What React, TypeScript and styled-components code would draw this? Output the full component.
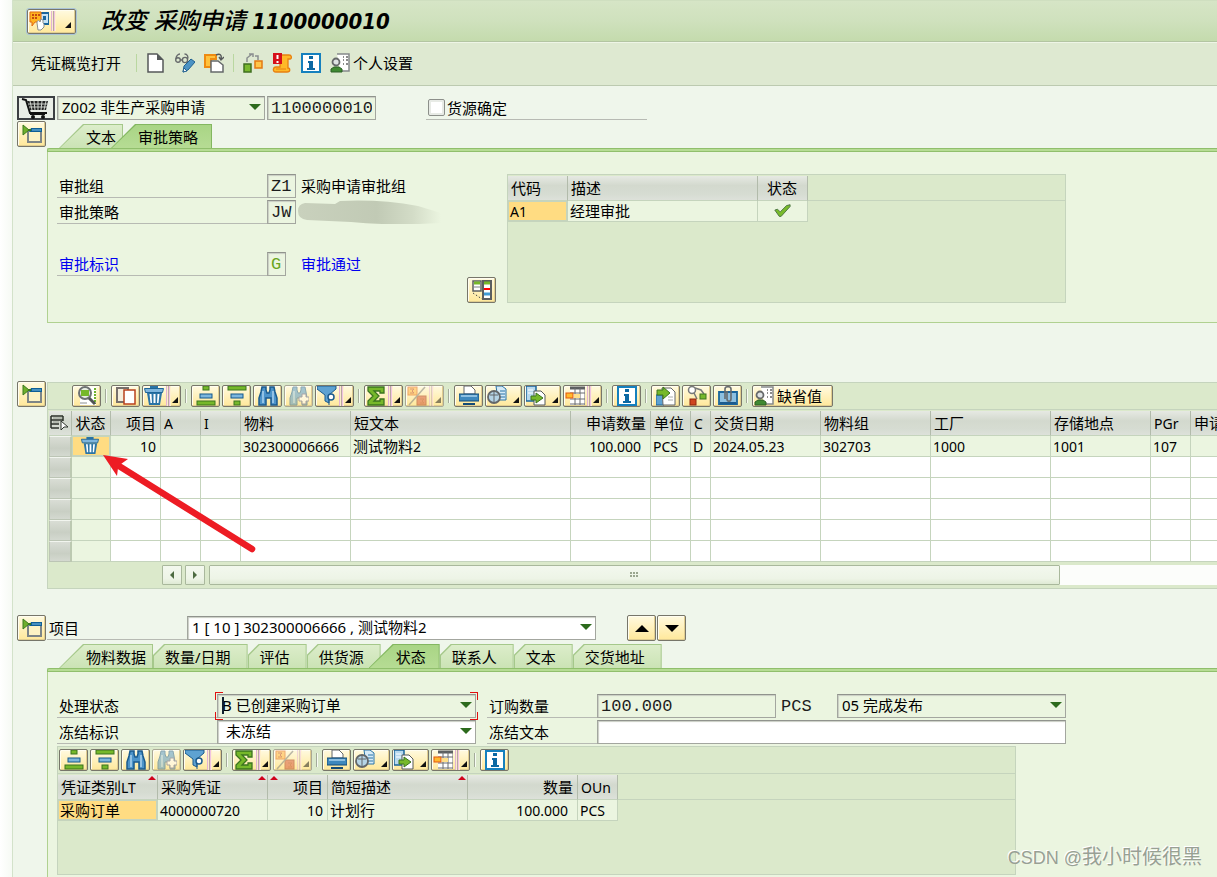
import React from "react";
import styled, { createGlobalStyle, css } from "styled-components";

const c = {
  page: "#eff6eb",
  panel: "#ebf5e0",
  frame: "#dbe9cb",
  line: "#c5d4bd",
  underline: "#b7bab3",
  field: "#a3a69f",
  tabLine: "#90bf6c",
  tabFill: "#b6dc94",
  selected: "#ffdc82",
};

const GlobalStyle = createGlobalStyle`
  *, *::before, *::after { box-sizing: border-box; }
  body { margin: 0; background: #fff; overflow: hidden; }
  body, button, input, select, table {
    font-family: "Noto Sans", "Noto Sans CJK SC", sans-serif;
    font-size: 15px;
    line-height: 20px;
    color: #000;
  }
  button, input, select { margin: 0; }
`;

/* ---------- icons ---------- */

const Icon = styled.svg.attrs({ width: 20, height: 20, viewBox: "0 0 20 20", "aria-hidden": true })`
  display: block;
  flex: none;
`;

const TreeIcon = () => (
  <Icon>
    <rect x="6" y="6" width="13" height="12" fill="#fdf3c4" stroke="#7d8587" strokeWidth="2" />
    <path d="M9 4h11v4H7z" fill="#0f5f96" />
    <path d="M10 6h9" stroke="#7fc0e8" />
    <path d="M1 1v10l6-5z" fill="#6fae2c" stroke="#3a7a1e" />
    <path d="M6 6h3" stroke="#3a7a1e" strokeWidth="2" />
  </Icon>
);
const CartIcon = () => (
  <svg width="30" height="22" viewBox="0 0 30 22" aria-hidden="true">
    <path d="M1 2l4 1 4 13h17" fill="none" stroke="#111" strokeWidth="2" />
    <path d="M6 4h21l-2 9H9z" fill="#222" />
    <path d="M9 4l2 9M13 4l1 9M17 4v9M21 4l-1 9M25 4l-2 9M7 7h20M8 10h18" stroke="#cfd3cd" />
    <path d="M9 17h15" stroke="#111" strokeWidth="2" />
    <circle cx="12" cy="20" r="2" fill="#111" />
    <circle cx="22" cy="20" r="2" fill="#111" />
  </svg>
);
const ServiceIcon = () => (
  <Icon>
    <path d="M12 2h8v11h-7" fill="#c6e2f4" stroke="#1a659c" strokeWidth="2" />
    <rect x="14" y="5" width="3" height="4" fill="#1a659c" />
    <path d="M1 1h11v10H6l-3 4v-4H1z" fill="#ffb41f" stroke="#e06a14" />
    <path d="M3 4h2M6 4h2M9 4h2M3 7h2M6 7h2" stroke="#c64a10" strokeWidth="2" />
    <path d="M8 12c0-3 2-3 3-1l1-3 2 1v3l1 1v3l-3 3H9z" fill="#fff" stroke="#8b8f90" />
  </Icon>
);
const NewIcon = () => (
  <Icon>
    <path d="M2 1h9l6 6v12H2z" fill="#fff" stroke="#55585a" strokeWidth="1.5" />
    <path d="M11 1v6h6z" fill="#55585a" />
  </Icon>
);
const GlassesIcon = () => (
  <Icon>
    <g fill="none" stroke="#66696b" strokeWidth="1.4">
      <circle cx="3" cy="7" r="2.3" />
      <circle cx="10" cy="7" r="2.6" />
      <path d="M1 6c0-3 2-5 4-5M5 7h2M12.5 6c1-2 0-5-3-5" />
    </g>
    <path d="M8 19l1-6 7-7 4 3-7 8z" fill="#4c93c4" stroke="#20608f" />
    <path d="M8 19l1-4 3 3z" fill="#fff" stroke="#20608f" />
  </Icon>
);
const OtherDocIcon = () => (
  <Icon>
    <path d="M1 2h11v4H7v8H1z" fill="#ffc23d" stroke="#ee8b12" strokeWidth="2" />
    <path d="M12 2c4-2 6 0 5 4M15 4l2 3 3-3" fill="none" stroke="#55585a" strokeWidth="1.4" />
    <path d="M7 8h7l5 4v7H7z" fill="#fff" stroke="#66696b" strokeWidth="1.5" />
  </Icon>
);
const FlowIcon = () => (
  <Icon>
    <path d="M4 9V5l5-4M6 1h4v3M12 3h3v4" fill="none" stroke="#8b8f90" strokeWidth="1.5" />
    <rect x="1" y="11" width="7" height="8" fill="#79b82f" stroke="#3f6f1f" strokeWidth="1.5" />
    <rect x="12" y="8" width="7" height="7" fill="#ffc64a" stroke="#e47812" strokeWidth="1.5" />
  </Icon>
);
const MessageIcon = () => (
  <Icon>
    <path d="M7 2h10c3 0 3 4 1 4h-2v9c2 0 3 4-1 4H4c-4 0-3-5 0-5h4V6z" fill="#ffb928" stroke="#e88010" strokeWidth="1.3" />
    <rect x="1" y="0" width="9" height="11" fill="#d6101a" />
    <path d="M5.5 2v4M5.5 8v2" stroke="#fff" strokeWidth="2" />
    <path d="M4 16h10" stroke="#e88010" />
  </Icon>
);
const InfoIcon = () => (
  <Icon>
    <rect x="1" y="1" width="18" height="18" fill="#fff" stroke="#1580be" strokeWidth="2" />
    <path d="M8 3h4v3H8zM7 8h5v7h2v2H6v-2h2v-5H7z" fill="#0b68a3" />
  </Icon>
);
const PersonIcon = () => (
  <Icon>
    <path d="M7 1h12v17h-9" fill="#fff" stroke="#85898a" strokeWidth="1.5" />
    <path d="M13 4h1M16 4h2M13 7h1M16 7h2M13 11h1M16 11h2" stroke="#666" strokeWidth="1.5" />
    <circle cx="6" cy="9" r="3.5" fill="#dfe3e4" stroke="#66696b" strokeWidth="1.8" />
    <path d="M1 19v-3l3-2h5l3 2v3z" fill="#3f8a32" stroke="#2d6126" />
  </Icon>
);
const ProfileIcon = () => (
  <Icon>
    <rect x="1" y="1" width="8" height="10" fill="#fff" stroke="#5b5e60" strokeWidth="1.5" />
    <path d="M2 3h6" stroke="#76b82a" strokeWidth="3" />
    <path d="M2 7h6" stroke="#a9adae" strokeWidth="1.5" />
    <rect x="11" y="1" width="8" height="18" fill="#fff" stroke="#5b5e60" strokeWidth="2" />
    <path d="M12 3h6" stroke="#76b82a" strokeWidth="3" />
    <path d="M12 9h6" stroke="#f00" strokeWidth="2" />
    <path d="M12 14h6" stroke="#3f9bd6" strokeWidth="3" />
    <path d="M1 13l9 6" stroke="#3f4244" strokeDasharray="1.5 2" />
  </Icon>
);
const DetailIcon = () => (
  <Icon>
    <rect x="3" y="1" width="16" height="18" fill="#fff" />
    <path d="M18 2v16" stroke="#6fb12e" strokeWidth="2" strokeDasharray="2 1" />
    <circle cx="8" cy="7" r="6" fill="#e8efe4" stroke="#6d7173" strokeWidth="2" />
    <rect x="4" y="4" width="8" height="6" fill="#76b82a" />
    <path d="M12 12l6 6" stroke="#505355" strokeWidth="3" />
    <path d="M3 17h7" stroke="#8b8f90" />
  </Icon>
);
const CopyIcon = () => (
  <Icon>
    <rect x="1" y="2" width="11" height="14" fill="#f4eedc" stroke="#77706c" strokeWidth="2" />
    <rect x="8" y="4" width="11" height="14" fill="#fff" stroke="#b8411d" strokeWidth="1.5" />
  </Icon>
);
const TrashIcon = () => (
  <Icon>
    <path d="M6 0h8v3H6z" fill="#2a74a6" />
    <path d="M0.5 2.5h19l-1 4h-17z" fill="#7db5dd" stroke="#1d6598" />
    <path d="M3 7h15l-2 12H5z" fill="#2a74a6" />
    <path d="M5.5 8h2l.5 9H6.5zM9.5 8h2v9h-2zM13.5 8h2l-1 9H13z" fill="#fff" />
  </Icon>
);
const SortAscIcon = () => (
  <Icon>
    <rect x="7" y="0" width="6" height="4" fill="#76b82a" stroke="#3b741f" />
    <rect x="4" y="8" width="12" height="4" fill="#7cb6dd" stroke="#15598c" />
    <rect x="1" y="15" width="18" height="4" fill="#76b82a" stroke="#3b741f" />
  </Icon>
);
const SortDescIcon = () => (
  <Icon>
    <rect x="1" y="0" width="18" height="4" fill="#76b82a" stroke="#3b741f" />
    <rect x="4" y="8" width="12" height="4" fill="#7cb6dd" stroke="#15598c" />
    <rect x="7" y="15" width="6" height="4" fill="#76b82a" stroke="#3b741f" />
  </Icon>
);
const FindIcon = () => (
  <Icon>
    <path d="M4 1h4v3l1 3h2l1-3V1h4l1 5 2 6v7h-6v-7H8v7H1v-7l2-6z" fill="#4c93c9" stroke="#1a5a8d" strokeWidth="1.5" />
    <path d="M5 5v12M15 5v12" stroke="#a9d2ee" strokeWidth="1.5" />
  </Icon>
);
const FindNextIcon = () => (
  <Icon>
    <path d="M4 1h4v3l1 3h2l1-3V1h4l1 5 1 6v7h-5v-7H8v7H1v-7l2-6z" fill="#4c93c9" stroke="#1a5a8d" />
    <path d="M5 5v12" stroke="#a9d2ee" strokeWidth="1.5" />
    <path d="M13 8h4v3h3v4h-3v3h-4v-3h-3v-4h3z" fill="#fff" stroke="#555b8f" />
  </Icon>
);
const FilterIcon = () => (
  <Icon>
    <path d="M0 0h19v3l-7 6v8l-4-2V9L0 3z" fill="#5ea2d2" stroke="#1a5a8d" />
    <circle cx="14" cy="11" r="3" fill="#fff" stroke="#1a5a8d" strokeWidth="1.5" />
    <path d="M12 13v6" stroke="#1a5a8d" />
  </Icon>
);
const SumIcon = () => (
  <Icon>
    <path d="M2 1h16v6h-4V5H8l5 5-5 5h6v-2h4v6H2v-4l5-5-5-5z" fill="#76b82a" stroke="#3b741f" strokeWidth="1.3" />
  </Icon>
);
const SubtotalIcon = () => (
  <Icon>
    <rect x="1" y="1" width="9" height="8" fill="#ffb23b" stroke="#df5a12" />
    <rect x="10" y="10" width="9" height="9" fill="#d6543a" stroke="#a13416" />
    <path d="M2 19L18 1" stroke="#777" strokeWidth="1.5" />
    <path d="M3 3h4L5 5l2 2H3M13 13h4l-2 2 2 2h-4" fill="none" stroke="#b8401c" />
  </Icon>
);
const PrintIcon = () => (
  <Icon>
    <path d="M5 8V0h7l4 4v4z" fill="#fff" stroke="#63676a" />
    <path d="M0 8h20v7H0z" fill="#3e88bd" stroke="#134b77" />
    <path d="M2 10h16" stroke="#a9d2ee" strokeWidth="1.5" />
    <path d="M4 18h12" stroke="#134b77" strokeWidth="2" />
  </Icon>
);
const ViewIcon = () => (
  <Icon>
    <path d="M9 0h6l4 3v11h-8z" fill="#d5eaf7" stroke="#2a74a6" />
    <path d="M13 5h5M13 8h5M13 11h5" stroke="#2a74a6" />
    <circle cx="7" cy="11" r="6" fill="#b5d4e6" stroke="#63676a" strokeWidth="1.8" />
    <path d="M7 5v12M3 9h8" stroke="#63676a" />
  </Icon>
);
const ExportIcon = () => (
  <Icon>
    <path d="M0 0h10v15H0z" fill="#b8d9ee" stroke="#1a659c" strokeWidth="1.5" />
    <path d="M2 4h5M2 7h5" stroke="#fff" />
    <path d="M8 5h7l4 4v10H8z" fill="#fff" stroke="#55585a" />
    <path d="M5 10h5V7l7 5-7 5v-3H5z" fill="#76b82a" stroke="#3b741f" />
  </Icon>
);
const LayoutIcon = () => (
  <Icon>
    <rect x="5" y="1" width="15" height="18" fill="#fff" />
    <path d="M5 2h15" stroke="#5c5f61" strokeWidth="3" />
    <path d="M5 7h15M5 13h15M5 18h15M10 2v17M15 2v17M20 2v17" stroke="#6a6d70" />
    <rect x="1" y="7" width="7" height="5" fill="#ffb92e" stroke="#e4570f" />
    <rect x="9" y="8" width="6" height="4" fill="#ffe08a" />
  </Icon>
);
const ImportIcon = () => (
  <Icon>
    <path d="M0 9h8v10H0z" fill="#5ea2d2" stroke="#1a659c" />
    <path d="M6 2h9l4 4v13H7z" fill="#fff" stroke="#63676a" />
    <path d="M12 11h5M12 14h5" stroke="#a9adae" />
    <path d="M1 4h6V1l7 6-7 6V9H1z" fill="#76b82a" stroke="#3b741f" />
  </Icon>
);
const ReleaseIcon = () => (
  <Icon>
    <circle cx="5" cy="4" r="3.5" fill="#fff" stroke="#77797a" strokeWidth="1.5" />
    <path d="M7 7l3 6M8 2l6 2 3 4" fill="none" stroke="#77797a" strokeWidth="1.5" />
    <rect x="3" y="13" width="6" height="6" fill="#cf4520" stroke="#8d2810" />
    <rect x="13" y="8" width="6" height="5" fill="#76b82a" stroke="#3b741f" />
  </Icon>
);
const AttachIcon = () => (
  <Icon>
    <path d="M1 6h18v12H1z" fill="#8dc0e0" stroke="#1a659c" strokeWidth="1.8" />
    <path d="M2 17h16" stroke="#1a5a8d" strokeWidth="2" />
    <path d="M7 13V3c0-3 6-3 6 0v10c0 3-4 3-4 0V5" fill="none" stroke="#666b6e" strokeWidth="1.6" />
  </Icon>
);
const CheckIcon = () => (
  <Icon>
    <path d="M2 9l3-1 3 3 7-7 4-1v2L9 16H7z" fill="#78ba2b" stroke="#47703f" />
  </Icon>
);
const ColumnsIcon = () => (
  <Icon>
    <path d="M2 3h12M2 15h8M2 3v12M14 3v5M2 7h12M2 11h8" fill="none" stroke="#2c322a" strokeWidth="1.5" />
    <path d="M4 5h9M4 9h6" stroke="#b3b9ae" strokeWidth="2" />
    <path d="M12 8v9l3-3h4z" fill="#fff" stroke="#2c322a" />
  </Icon>
);
const Triangle = ({ up, size = 12, color = "#2c6a1c" }: { up?: boolean; size?: number; color?: string }) => (
  <svg width={size} height={size / 2} viewBox="0 0 12 6" aria-hidden="true">
    <path d={up ? "M0 6h12L6 0z" : "M0 0h12L6 6z"} fill={color} />
  </svg>
);

/* ---------- shell ---------- */

const Shell = styled.div`
  position: relative;
  display: flex;
  min-height: 100vh;
  padding-left: 12px;
  background: linear-gradient(90deg, #fff, #f6faf4 12px);
  overflow: hidden;
`;
const Window = styled.main`
  flex: 1;
  min-width: 0;
  display: flex;
  flex-direction: column;
  border-left: 1px solid #d3e2ca;
  background: ${c.page};
`;
const TitleBar = styled.header`
  display: flex;
  align-items: center;
  gap: 25px;
  height: 42px;
  padding: 0 0 0 14px;
  border-top: 1px solid #cfdfc0;
  border-bottom: 1px solid #b3c5a2;
  background: linear-gradient(#d6e5c6, #cfe1bd 50%, #c4dbad);
`;
const Title = styled.h1`
  margin: 0;
  font: italic 700 22px/28px "DejaVu Sans Condensed", "Noto Sans CJK SC", sans-serif;
  white-space: pre;
`;
const TitleText = styled.span`
  font-size: 23px;
  font-weight: 500;
`;
const ActionBar = styled.nav`
  display: flex;
  align-items: center;
  gap: 9px;
  height: 44px;
  padding: 0 0 2px 18px;
  border-top: 1px solid #eef5e6;
  border-bottom: 1px solid #bccab0;
  background: #dee9d1;
`;
const ActionButton = styled.button<{ $text?: boolean }>`
  display: flex;
  align-items: center;
  gap: 3px;
  height: 24px;
  padding: 0;
  padding-right: ${(p) => (p.$text ? 6 : 0)}px;
  border: 0;
  background: none;
  white-space: nowrap;
`;
const ActionDivider = styled.i`
  width: 1px;
  height: 18px;
  background: #b9d7a0;
`;

const yellow = css`
  border: 1px solid #77766a;
  border-radius: 2px;
  background: linear-gradient(#fffae0, #ffe89a);
  box-shadow: inset -1px -1px 0 #e0cd90, inset 1px 1px 0 #fffdf0;
`;
const SquareButton = styled.button`
  ${yellow}
  display: flex;
  align-items: center;
  justify-content: center;
  flex: none;
  width: 29px;
  height: 26px;
  padding: 0;
`;
const ServiceButton = styled.button`
  ${yellow}
  display: flex;
  align-items: center;
  width: 49px;
  height: 25px;
  padding: 0 3px 0 1px;
  outline: 1px solid #a9c3d8;
`;

/* ---------- tool buttons ---------- */

const ToolStrip = styled.div<{ $indent: number }>`
  display: flex;
  gap: 2px;
  height: 27px;
  padding: 2px 0 0 ${(p) => p.$indent}px;
  border-bottom: 1px solid ${c.line};
`;
const ToolButtonBox = styled.button<{ $width: number }>`
  ${yellow}
  display: flex;
  align-items: center;
  justify-content: ${(p) => (p.$width === 29 ? "center" : "flex-start")};
  gap: ${(p) => (p.$width > 39 ? 3 : 0)}px;
  flex: none;
  width: ${(p) => p.$width}px;
  height: 22px;
  padding: 0 1px;
  white-space: nowrap;
  &:disabled > * { opacity: 0.5; }
  &:disabled { border-color: #a9a895; color: #000; }
`;
const ToolDivider = styled.i`
  flex: none;
  width: 6px;
  height: 14px;
  margin-top: 4px;
  background: linear-gradient(90deg, transparent 2px, #a3ab9a 2px 3px, #f7fbf3 3px 4px, transparent 4px);
`;
const SplitBar = styled.i`
  width: 5px;
  height: 20px;
  margin-left: 2px;
  background: linear-gradient(90deg, #e2b3d4 1px, #fbeccc 1px 2px, #b9a7a0 2px 3px, #f0c4e0 3px 4px, #fff0cc 4px);
`;
const MenuMark = styled.i`
  width: 6px;
  height: 6px;
  margin: 8px 1px 0 auto;
  background: #111;
  clip-path: polygon(100% 0, 100% 100%, 0 100%);
`;

type Tool = { icon: React.FC; label: string; kind?: "split" | "menu"; off?: boolean } | "|";

const commonTools: Tool[] = [
  { icon: SortAscIcon, label: "升序排序" },
  { icon: SortDescIcon, label: "降序排序" },
  { icon: FindIcon, label: "查找" },
  { icon: FindNextIcon, label: "查找下一个", off: true },
  { icon: FilterIcon, label: "过滤器", kind: "split" },
  "|",
  { icon: SumIcon, label: "总计", kind: "split" },
  { icon: SubtotalIcon, label: "小计", kind: "split", off: true },
  "|",
  { icon: PrintIcon, label: "打印" },
  { icon: ViewIcon, label: "视图", kind: "menu" },
  { icon: ExportIcon, label: "导出", kind: "menu" },
  { icon: LayoutIcon, label: "布局", kind: "split" },
  "|",
  { icon: InfoIcon, label: "信息" },
];
const itemTools: Tool[] = [
  { icon: DetailIcon, label: "详细信息" },
  "|",
  { icon: CopyIcon, label: "复制" },
  { icon: TrashIcon, label: "删除", kind: "split" },
  "|",
  ...commonTools,
  "|",
  { icon: ImportIcon, label: "导入" },
  { icon: ReleaseIcon, label: "批准" },
  { icon: AttachIcon, label: "附件" },
  "|",
];

const Tools = ({ items }: { items: Tool[] }) => (
  <>
    {items.map((t, i) =>
      t === "|" ? (
        <ToolDivider key={i} />
      ) : (
        <ToolButtonBox
          key={i}
          type="button"
          aria-label={t.label}
          disabled={t.off}
          $width={t.kind === "split" ? 39 : t.kind === "menu" ? 37 : 29}
        >
          <t.icon />
          {t.kind === "split" && <SplitBar />}
          {t.kind && <MenuMark />}
        </ToolButtonBox>
      )
    )}
  </>
);

/* ---------- fields ---------- */

const fieldBox = css`
  height: 24px;
  border: 1px solid ${c.field};
  border-top-color: #90938d;
  border-radius: 0;
  box-shadow: inset 1px 1px 1px #c9cec4;
  outline: 0;
`;
const TextField = styled.input<{ $width: number; $tone?: string; $editable?: boolean }>`
  ${fieldBox}
  flex: 0 1 ${(p) => p.$width}px;
  width: ${(p) => p.$width}px;
  min-width: 0;
  padding: 0 3px;
  background: ${(p) => (p.$editable ? "#fff" : c.panel)};
  color: ${(p) => p.$tone ?? "#1d1d1d"};
  font: 17px/22px "Liberation Mono", monospace;
`;
const Mono = styled.span`
  font: 17px/22px "Liberation Mono", monospace;
  color: #1d1d1d;
`;
const SelectBox = styled.span<{ $width: number }>`
  position: relative;
  flex: 0 1 ${(p) => p.$width}px;
  min-width: 0;
  & > svg {
    position: absolute;
    right: 4px;
    top: 8px;
    pointer-events: none;
  }
`;
const NativeSelect = styled.select<{ $white?: boolean; $pad: number }>`
  ${fieldBox}
  appearance: none;
  display: block;
  width: 100%;
  padding: 0 20px 2px ${(p) => p.$pad}px;
  background: ${(p) => (p.$white ? "#fff" : c.panel)};
`;
const FocusMarks = styled.svg`
  && {
    top: -2px;
    left: -2px;
    right: auto;
  }
`;

const Select = (p: { label: string; value: string; width: number; white?: boolean; pad?: number; focus?: boolean }) => (
  <SelectBox $width={p.width}>
    <NativeSelect aria-label={p.label} $white={p.white} $pad={p.pad ?? 4}>
      <option>{p.value}</option>
    </NativeSelect>
    <Triangle />
    {p.focus && (
      <FocusMarks width="263" height="28" viewBox="0 0 263 28" aria-hidden="true">
        <path d="M0 0h8v1H1v7H0zM255 0h8v8h-1V1h-7zM0 20h1v7h7v1H0zM262 20h1v8h-8v-1h7z" fill="#e01010" />
        <path d="M7 5h2v17H7z" fill="#102030" />
      </FocusMarks>
    )}
  </SelectBox>
);

const FieldLabel = styled.label<{ $width: number; $blue?: boolean; $gap?: number }>`
  flex: none;
  width: ${(p) => p.$width}px;
  height: 24px;
  margin-left: ${(p) => p.$gap ?? 0}px;
  padding: 2px 0 0 2px;
  border-bottom: 1px solid ${c.underline};
  color: ${(p) => (p.$blue ? "#0000f0" : "#000")};
  white-space: nowrap;
`;
const Row = styled.div`
  display: flex;
  height: 24px;
`;
const Stack = styled.div`
  display: flex;
  flex-direction: column;
  gap: 2px;
`;

/* ---------- header section ---------- */

const HeadRow = styled(Row)`
  gap: 2px;
  margin: 10px 0 1px 4px;
`;
const CartBox = styled.span`
  display: flex;
  align-items: center;
  justify-content: center;
  width: 38px;
  height: 24px;
  border: 2px solid #3c3f43;
  background: #e9ede6;
`;
const CheckLabel = styled.label`
  display: flex;
  align-items: center;
  gap: 2px;
  width: 221px;
  margin-left: 48px;
  padding-left: 2px;
  border-bottom: 1px solid ${c.underline};
`;
const CheckBox = styled.input`
  appearance: none;
  width: 17px;
  height: 17px;
  border: 1px solid #8c8f8a;
  border-radius: 2px;
  background: #fff;
  box-shadow: inset 0 0 0 2px #e8ebe6;
`;

const Section = styled.section<{ $top?: number; $fill?: boolean }>`
  position: relative;
  display: flex;
  gap: 1px;
  margin-top: ${(p) => p.$top ?? 0}px;
  padding-left: 4px;
  flex: ${(p) => (p.$fill ? "1" : "none")};
`;
const Body = styled.div`
  flex: 1;
  min-width: 0;
  display: flex;
  flex-direction: column;
`;

/* ---------- tabs ---------- */

const TabList = styled.div`
  display: flex;
  height: 27px;
  padding: 3px 0 0 12px;
`;
const shapes = {
  first: { pad: "0 7px 0 27px", cut: "polygon(24px 0, 100% 0, 100% 100%, 0 100%)", z: 1, left: 0 },
  on: { pad: "0 14px 0 27px", cut: "polygon(24px 0, 100% 0, 100% 100%, 0 100%)", z: 2, left: -12 },
  next: { pad: "0 17px 0 12px", cut: "polygon(11px 0, 100% 0, 100% 100%, 0 100%, 0 11px)", z: 1, left: 0 },
};
const Tab = styled.button<{ $shape: keyof typeof shapes }>`
  position: relative;
  z-index: ${(p) => shapes[p.$shape].z};
  isolation: isolate;
  height: 24px;
  margin-left: ${(p) => shapes[p.$shape].left}px;
  padding: ${(p) => shapes[p.$shape].pad};
  border: 0;
  background: none;
  white-space: nowrap;
  line-height: 26px;
  &::before,
  &::after {
    content: "";
    position: absolute;
    inset: 0;
    z-index: -2;
    background: ${(p) => (p.$shape === "on" ? "#83b760" : "#a5c88a")};
    clip-path: ${(p) => shapes[p.$shape].cut};
  }
  &::after {
    inset: 1px 1px 0 1px;
    z-index: -1;
    background: ${(p) =>
      p.$shape === "on" ? "linear-gradient(#a9d585, #b6dc94)" : "linear-gradient(#dcedca, #cbe3b5)"};
  }
`;
const TabPanel = styled.div<{ $open?: boolean; $top: number }>`
  display: flex;
  flex: ${(p) => (p.$open ? 1 : "none")};
  flex-direction: ${(p) => (p.$open ? "column" : "row")};
  padding: ${(p) => p.$top}px 0 ${(p) => (p.$open ? 2 : 19)}px 9px;
  border-left: 1px solid #b0d190;
  border-bottom: ${(p) => (p.$open ? "0" : "1px solid #b0d190")};
  background: ${c.panel};
`;
const TabEdge = styled.div`
  height: 4px;
  border: 1px solid ${c.tabLine};
  border-right: 0;
  border-radius: 2px 0 0 0;
  background: ${c.tabFill};
`;

const Tabs = ({ names, active }: { names: string[]; active: number }) => (
  <>
    <TabList role="tablist">
      {names.map((n, i) => (
        <Tab key={n} type="button" role="tab" aria-selected={i === active} $shape={i === active ? "on" : i === 0 ? "first" : "next"}>
          {n}
        </Tab>
      ))}
    </TabList>
    <TabEdge />
  </>
);

/* ---------- approval form ---------- */

const ApprovalForm = styled.div`
  flex: 0 0 410px;
  display: flex;
  flex-direction: column;
  gap: 2px;
`;
const ApprovalRow = styled.div<{ $gapTop?: boolean }>`
  display: grid;
  grid-template-columns: 210px 34px 1fr;
  height: 24px;
  margin-top: ${(p) => (p.$gapTop ? 26 : 0)}px;
`;
const Description = styled.span<{ $blue?: boolean }>`
  padding-top: 2px;
  color: ${(p) => (p.$blue ? "#0000f0" : "#000")};
`;
const Smudge = styled.svg`
  margin-left: -4px;
`;
const ProfileSlot = styled.div`
  display: flex;
  align-items: flex-end;
  margin-right: 11px;
`;

/* ---------- grids ---------- */

const Frame = styled.div<{ $width?: number; $height?: number; $open?: boolean }>`
  width: ${(p) => (p.$width ? p.$width + "px" : "auto")};
  max-width: 100%;
  min-width: 0;
  height: ${(p) => (p.$height ? p.$height + "px" : "auto")};
  border: 1px solid ${c.line};
  border-right-width: ${(p) => (p.$open ? 0 : 1)}px;
  background: ${c.frame};
  overflow: hidden;
`;
const Grid = styled.table<{ $width?: number; $indent?: number }>`
  width: ${(p) => (p.$width ? p.$width + "px" : "100%")};
  margin: 1px 0 0 ${(p) => p.$indent ?? 0}px;
  table-layout: fixed;
  border-spacing: 0;
`;
const Th = styled.th<{ $align?: string; $blank?: boolean; $flush?: boolean }>`
  position: relative;
  height: 25px;
  padding: ${(p) => (p.$flush ? "0" : "0 4px 0 3px")};
  border-bottom: 1px solid ${c.line};
  border-right: ${(p) => (p.$blank ? "0" : "1px solid #b2bbab")};
  background: ${(p) => (p.$blank ? "none" : "linear-gradient(#e6e9e3, #d3d9ce 40%, #d6dcd2 75%, #dde1da)")};
  font-weight: 400;
  text-align: ${(p) => p.$align ?? "left"};
  white-space: nowrap;
  overflow: hidden;
  & > svg { display: block; }
`;
const Td = styled.td<{ $align?: string; $tone?: "white" | "pick" | "blank"; $right?: number }>`
  height: 21px;
  padding: 0 ${(p) => p.$right ?? 4}px 0 2px;
  border-right: ${(p) => (p.$tone === "blank" ? "0" : `1px solid ${c.line}`)};
  border-bottom: ${(p) => (p.$tone === "blank" ? "0" : `1px solid ${c.line}`)};
  background: ${(p) =>
    p.$tone === "white" ? "#fff" : p.$tone === "pick" ? c.selected : p.$tone === "blank" ? "none" : c.panel};
  box-shadow: ${(p) => (p.$tone === "pick" ? `inset 0 0 0 1px ${c.line}` : "none")};
  text-align: ${(p) => p.$align ?? "left"};
  line-height: 18px;
  white-space: nowrap;
  & > svg { height: 18px; margin: 0 auto; }
`;
const Latin = styled.span`
  font-size: 14px;
`;
const RowHandle = styled.th`
  height: 21px;
  padding: 0;
  border: 1px solid #bcc5b5;
  border-right: 2px solid #bcc9b1;
  border-top-color: #f2f5ef;
  background: linear-gradient(#d9ddd5, #c9cfc4 60%, #d4d9d0);
`;
const SortMark = styled.i<{ $left?: boolean }>`
  position: absolute;
  top: 1px;
  ${(p) => (p.$left ? "left: 2px;" : "right: 1px;")}
  width: 8px;
  height: 4px;
  background: #d0021b;
  clip-path: polygon(50% 0, 100% 100%, 0 100%);
`;

const itemColumns: { name: string; width: number; value: React.ReactNode; align?: string; right?: number }[] = [
  { name: "状态", width: 39, value: <TrashIcon />, align: "center" },
  { name: "项目", width: 50, value: "10", align: "right" },
  { name: "A", width: 40, value: "" },
  { name: "I", width: 40, value: "" },
  { name: "物料", width: 110, value: "302300006666" },
  { name: "短文本", width: 220, value: "测试物料2" },
  { name: "申请数量", width: 80, value: "100.000", align: "right", right: 9 },
  { name: "单位", width: 40, value: "PCS" },
  { name: "C", width: 20, value: "D" },
  { name: "交货日期", width: 110, value: "2024.05.23" },
  { name: "物料组", width: 110, value: "302703" },
  { name: "工厂", width: 120, value: "1000" },
  { name: "存储地点", width: 100, value: "1001" },
  { name: "PGr", width: 40, value: "107" },
  { name: "申请", width: 110, value: "" },
];
const isCjk = (v: string) => /[\u4e00-\u9fff]/.test(v);
const Text = ({ children }: { children: string }) => (
  <>{children.split(/([\u4e00-\u9fff]+)/).map((s, i) => (isCjk(s) ? s : s && <Latin key={i}>{s}</Latin>))}</>
);

const ItemGrid = () => (
  <Grid $width={1252} $indent={1}>
    <colgroup>
      <col style={{ width: 23 }} />
      {itemColumns.map((k) => (
        <col key={k.name} style={{ width: k.width }} />
      ))}
    </colgroup>
    <thead>
      <tr>
        <Th aria-label="选择" $flush>
          <ColumnsIcon />
        </Th>
        {itemColumns.map((k) => (
          <Th key={k.name} $align={k.align}>
            <Text>{k.name}</Text>
          </Th>
        ))}
      </tr>
    </thead>
    <tbody>
      <tr>
        <RowHandle scope="row" />
        {itemColumns.map((k, i) => (
          <Td key={k.name} $align={k.align} $right={k.right} $tone={i === 0 ? "pick" : undefined}>
            {typeof k.value === "string" ? <Text>{k.value}</Text> : k.value}
          </Td>
        ))}
      </tr>
      {[1, 2, 3, 4, 5].map((r) => (
        <tr key={r}>
          <RowHandle scope="row" />
          {itemColumns.map((k, i) => (
            <Td key={k.name} $tone={i === 0 ? undefined : "white"} />
          ))}
        </tr>
      ))}
    </tbody>
  </Grid>
);

const Scroller = styled.div`
  display: flex;
  gap: 3px;
  height: 26px;
  padding: 3px 0 3px 114px;
`;
const scrollPiece = css`
  border: 1px solid #a9b89c;
  border-radius: 1px;
  background: linear-gradient(#f3f8ee, #edf4e6 70%, #dfead4);
`;
const ScrollArrow = styled.button<{ $flip?: boolean }>`
  ${scrollPiece}
  display: flex;
  align-items: center;
  justify-content: center;
  width: 20px;
  height: 20px;
  padding: 0;
  & > svg { transform: rotate(${(p) => (p.$flip ? -90 : 90)}deg); }
`;
const Track = styled.div`
  flex: 1;
  height: 20px;
  margin-left: 1px;
  background: #fcfdfb;
`;
const Thumb = styled.div`
  ${scrollPiece}
  display: flex;
  align-items: center;
  justify-content: center;
  width: 84.4%;
  height: 20px;
`;
const Grip = styled.i`
  width: 9px;
  height: 6px;
  background: radial-gradient(circle at 1px 1px, #9aa68f 1px, transparent 1px) 0 0 / 3px 3px;
`;

const Pointer = styled.svg`
  position: absolute;
  left: 84px;
  top: 70px;
  pointer-events: none;
`;

/* ---------- item detail ---------- */

const ItemHead = styled(Row)`
  height: 26px;
  padding-top: 1px;
`;
const StepButtons = styled.div`
  display: flex;
  gap: 1px;
  margin: -1px 0 0 31px;
`;
const UnitCell = styled.span`
  width: 61px;
  padding: 1px 0 0 5px;
`;
const FrameSlot = styled.div<{ $top: number }>`
  margin-top: ${(p) => p.$top}px;
`;

const orderColumns = [
  { name: "凭证类别LT", width: 100, value: "采购订单", mark: "right" },
  { name: "采购凭证", width: 110, value: "4000000720", mark: "right" },
  { name: "项目", width: 60, value: "10", align: "right", mark: "left" },
  { name: "简短描述", width: 140, value: "计划行", mark: "right" },
  { name: "数量", width: 110, value: "100.000", align: "right", right: 9 },
  { name: "OUn", width: 40, value: "PCS" },
];

const Watermark = styled.div`
  position: absolute;
  right: 15px;
  bottom: 5px;
  font: 20px/28px "Liberation Sans", "Noto Sans CJK SC", sans-serif;
  color: #98a094;
  text-shadow: -1px -1px 0 #fff;
  white-space: nowrap;
`;
const WatermarkSite = styled.span`
  font-size: 18px;
`;

export default function App() {
  return (
    <Shell>
      <GlobalStyle />
      <Window>
        <TitleBar>
          <ServiceButton type="button" aria-label="对象服务">
            <ServiceIcon />
            <SplitBar />
            <MenuMark />
          </ServiceButton>
          <Title>
            <TitleText>改变 采购申请 </TitleText>1100000010
          </Title>
        </TitleBar>
        <ActionBar>
          <ActionButton type="button" $text>凭证概览打开</ActionButton>
          <ActionDivider />
          <ActionButton type="button" aria-label="新建"><NewIcon /></ActionButton>
          <ActionButton type="button" aria-label="显示/更改"><GlassesIcon /></ActionButton>
          <ActionButton type="button" aria-label="其他凭证"><OtherDocIcon /></ActionButton>
          <ActionDivider />
          <ActionButton type="button" aria-label="流程"><FlowIcon /></ActionButton>
          <ActionButton type="button" aria-label="消息"><MessageIcon /></ActionButton>
          <ActionButton type="button" aria-label="帮助"><InfoIcon /></ActionButton>
          <ActionButton type="button"><PersonIcon />个人设置</ActionButton>
        </ActionBar>

        <HeadRow>
          <CartBox><CartIcon /></CartBox>
          <Select label="凭证类型" value="Z002 非生产采购申请" width={208} />
          <TextField aria-label="采购申请" $width={109} defaultValue="1100000010" readOnly />
          <CheckLabel>
            <CheckBox type="checkbox" />
            货源确定
          </CheckLabel>
        </HeadRow>

        <Section>
          <SquareButton type="button" aria-label="折叠抬头"><TreeIcon /></SquareButton>
          <Body>
            <Tabs names={["文本", "审批策略"]} active={1} />
            <TabPanel $top={22}>
              <ApprovalForm>
                <ApprovalRow>
                  <FieldLabel htmlFor="group" $width={210}>审批组</FieldLabel>
                  <TextField id="group" $width={29} defaultValue="Z1" readOnly />
                  <Description>采购申请审批组</Description>
                </ApprovalRow>
                <ApprovalRow>
                  <FieldLabel htmlFor="strategy" $width={210}>审批策略</FieldLabel>
                  <TextField id="strategy" $width={29} defaultValue="JW" readOnly />
                  <Smudge width="144" height="24" viewBox="0 0 144 24" aria-hidden="true">
                    <defs>
                      <linearGradient id="smudge">
                        <stop offset="0" stopColor="#c9d1bd" />
                        <stop offset="0.55" stopColor="#c1cab5" />
                        <stop offset="0.8" stopColor="#d3dcc7" />
                        <stop offset="1" stopColor="#ebf5e0" />
                      </linearGradient>
                    </defs>
                    <path d="M8 3l30 1 5-3q40-2 78 5l23 7v10q-50 3-90-1l-44-2q-9-1-9-9 0-7 7-8z" fill="url(#smudge)" />
                  </Smudge>
                </ApprovalRow>
                <ApprovalRow $gapTop>
                  <FieldLabel htmlFor="indicator" $width={210} $blue>审批标识</FieldLabel>
                  <TextField id="indicator" $width={19} $tone="#6aa51f" defaultValue="G" readOnly />
                  <Description $blue>审批通过</Description>
                </ApprovalRow>
              </ApprovalForm>
              <ProfileSlot>
                <SquareButton type="button" aria-label="审批明细"><ProfileIcon /></SquareButton>
              </ProfileSlot>
              <Frame $width={559} $height={129}>
                <Grid>
                  <colgroup>
                    <col style={{ width: 60 }} />
                    <col style={{ width: 190 }} />
                    <col style={{ width: 50 }} />
                    <col />
                  </colgroup>
                  <thead>
                    <tr>
                      <Th>代码</Th>
                      <Th>描述</Th>
                      <Th $align="center">状态</Th>
                      <Th $blank />
                    </tr>
                  </thead>
                  <tbody>
                    <tr>
                      <Td $tone="pick"><Latin>A1</Latin></Td>
                      <Td>经理审批</Td>
                      <Td $align="center"><CheckIcon /></Td>
                      <Td $tone="blank" />
                    </tr>
                  </tbody>
                </Grid>
              </Frame>
            </TabPanel>
          </Body>
        </Section>

        <Section $top={58}>
          <SquareButton type="button" aria-label="折叠项目概览"><TreeIcon /></SquareButton>
          <Body>
            <FrameSlot $top={1}>
              <Frame $open>
                <ToolStrip $indent={24} role="toolbar">
                  <Tools items={itemTools} />
                  <ToolButtonBox type="button" $width={81}>
                    <PersonIcon />
                    缺省值
                  </ToolButtonBox>
                </ToolStrip>
                <ItemGrid />
                <Scroller>
                  <ScrollArrow type="button" aria-label="向左"><Triangle size={8} color="#4d6b41" /></ScrollArrow>
                  <ScrollArrow type="button" aria-label="向右" $flip><Triangle size={8} color="#4d6b41" /></ScrollArrow>
                  <Track>
                    <Thumb><Grip /></Thumb>
                  </Track>
                </Scroller>
              </Frame>
            </FrameSlot>
          </Body>
          <Pointer width="165" height="110" viewBox="0 0 165 110" aria-hidden="true">
            <path d="M22 15L155 98" stroke="#ed1c24" strokeWidth="6.5" strokeLinecap="round" />
            <path d="M6 4l25 4-7 5-3 4-1 8z" fill="#ed1c24" />
          </Pointer>
        </Section>

        <Section $top={26} $fill>
          <SquareButton type="button" aria-label="折叠项目细节"><TreeIcon /></SquareButton>
          <Body>
            <ItemHead>
              <FieldLabel as="span" $width={140}>项目</FieldLabel>
              <Select label="项目" value="1 [ 10 ] 302300006666 , 测试物料2" width={409} white />
              <StepButtons>
                <SquareButton type="button" aria-label="上一项"><Triangle up size={14} color="#000" /></SquareButton>
                <SquareButton type="button" aria-label="下一项"><Triangle size={14} color="#000" /></SquareButton>
              </StepButtons>
            </ItemHead>
            <Tabs names={["物料数据", "数量/日期", "评估", "供货源", "状态", "联系人", "文本", "交货地址"]} active={4} />
            <TabPanel $open $top={22}>
              <Stack>
                <Row>
                  <FieldLabel as="span" $width={160}>处理状态</FieldLabel>
                  <Select label="处理状态" value="B 已创建采购订单" width={259} focus />
                  <FieldLabel htmlFor="qty" $width={110} $gap={11}>订购数量</FieldLabel>
                  <TextField id="qty" $width={179} defaultValue="100.000" readOnly />
                  <UnitCell><Mono>PCS</Mono></UnitCell>
                  <Select label="发布状态" value="05 完成发布" width={229} />
                </Row>
                <Row>
                  <FieldLabel as="span" $width={160}>冻结标识</FieldLabel>
                  <Select label="冻结标识" value="未冻结" width={259} pad={8} white />
                  <FieldLabel htmlFor="blockText" $width={110} $gap={11}>冻结文本</FieldLabel>
                  <TextField id="blockText" $width={469} $editable />
                </Row>
              </Stack>
              <FrameSlot $top={2}>
                <Frame $width={959} $height={129}>
                  <ToolStrip $indent={1} role="toolbar">
                    <Tools items={commonTools} />
                  </ToolStrip>
                  <Grid>
                    <colgroup>
                      {orderColumns.map((k) => (
                        <col key={k.name} style={{ width: k.width }} />
                      ))}
                      <col />
                    </colgroup>
                    <thead>
                      <tr>
                        {orderColumns.map((k) => (
                          <Th key={k.name} $align={k.align}>
                            <Text>{k.name}</Text>
                            {k.mark && <SortMark $left={k.mark === "left"} />}
                          </Th>
                        ))}
                        <Th $blank />
                      </tr>
                    </thead>
                    <tbody>
                      <tr>
                        {orderColumns.map((k, i) => (
                          <Td key={k.name} $align={k.align} $right={k.right} $tone={i === 0 ? "pick" : undefined}>
                            <Text>{k.value}</Text>
                          </Td>
                        ))}
                        <Td $tone="blank" />
                      </tr>
                    </tbody>
                  </Grid>
                </Frame>
              </FrameSlot>
            </TabPanel>
          </Body>
        </Section>
      </Window>
      <Watermark><WatermarkSite>CSDN @</WatermarkSite>我小时候很黑</Watermark>
    </Shell>
  );
}
